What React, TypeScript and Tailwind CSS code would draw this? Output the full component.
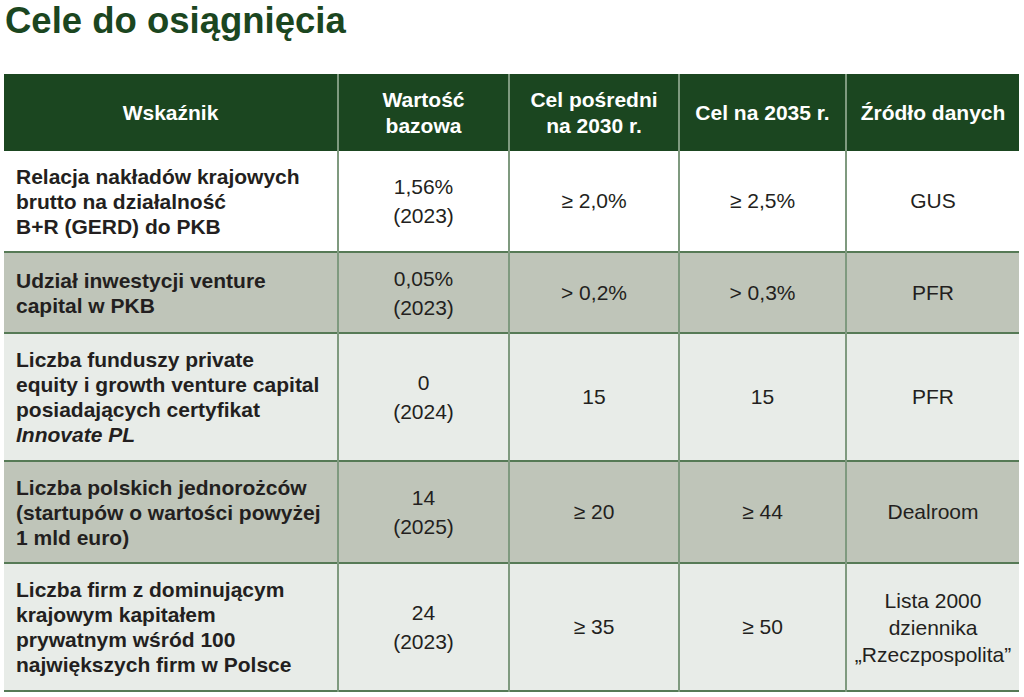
import React from "react";

type Row = {
  label: React.ReactNode;
  base: [string, string];
  mid: string;
  target: string;
  source: React.ReactNode;
  bg: string;
  h: string;
};

const rows: Row[] = [
  {
    label: (
      <>
        Relacja nakładów krajowych
        <br />
        brutto na działalność
        <br />
        B+R (GERD) do PKB
      </>
    ),
    base: ["1,56%", "(2023)"],
    mid: "≥ 2,0%",
    target: "≥ 2,5%",
    source: "GUS",
    bg: "bg-white",
    h: "h-[101px]",
  },
  {
    label: (
      <>
        Udział inwestycji venture
        <br />
        capital w PKB
      </>
    ),
    base: ["0,05%", "(2023)"],
    mid: "> 0,2%",
    target: "> 0,3%",
    source: "PFR",
    bg: "bg-[#bfc5b9]",
    h: "h-[81px]",
  },
  {
    label: (
      <>
        Liczba funduszy private
        <br />
        equity i growth venture capital
        <br />
        posiadających certyfikat
        <br />
        <i>Innovate PL</i>
      </>
    ),
    base: ["0", "(2024)"],
    mid: "15",
    target: "15",
    source: "PFR",
    bg: "bg-[#e8ece8]",
    h: "h-[128px]",
  },
  {
    label: (
      <>
        Liczba polskich jednorożców
        <br />
        (startupów o wartości powyżej
        <br />1 mld euro)
      </>
    ),
    base: ["14", "(2025)"],
    mid: "≥ 20",
    target: "≥ 44",
    source: "Dealroom",
    bg: "bg-[#bfc5b9]",
    h: "h-[102px]",
  },
  {
    label: (
      <>
        Liczba firm z dominującym
        <br />
        krajowym kapitałem
        <br />
        prywatnym wśród 100
        <br />
        największych firm w Polsce
      </>
    ),
    base: ["24", "(2023)"],
    mid: "≥ 35",
    target: "≥ 50",
    source: (
      <span className="block leading-[27px]">
        Lista 2000
        <br />
        dziennika
        <br />
        „Rzeczpospolita”
      </span>
    ),
    bg: "bg-[#e8ece8]",
    h: "h-[128px]",
  },
];

export default function App() {
  return (
    <div
      className="w-[1024px] h-[697px] bg-white overflow-hidden text-[#231f20]"
      style={{ fontFamily: '"Liberation Sans", Arial, sans-serif' }}
    >
      <h1 className="pl-[5px] pt-0 text-[36.5px] leading-[42px] font-bold text-[#1b4620]">
        Cele do osiągnięcia
      </h1>
      <div className="pl-[4px] pt-[32px]">
        <table className="w-[1015px] table-fixed border-collapse text-[21px]">
          <colgroup>
            <col className="w-[334px]" />
            <col className="w-[171px]" />
            <col className="w-[170px]" />
            <col className="w-[167px]" />
            <col className="w-[173px]" />
          </colgroup>
          <thead>
            <tr className="h-[77px] bg-[#1b4620] text-white font-bold leading-[26px]">
              <th className="border-r-2 border-[#7f9a7f] text-center font-bold">Wskaźnik</th>
              <th className="border-r-2 border-[#7f9a7f] text-center font-bold">
                Wartość
                <br />
                bazowa
              </th>
              <th className="border-r-2 border-[#7f9a7f] text-center font-bold">
                Cel pośredni
                <br />
                na 2030 r.
              </th>
              <th className="border-r-2 border-[#7f9a7f] text-center font-bold">Cel na 2035 r.</th>
              <th className="text-center font-bold">Źródło danych</th>
            </tr>
          </thead>
          <tbody>
            {rows.map((r, i) => (
              <tr key={i} className={`${r.bg} ${r.h} border-b-2 border-[#567a56]`}>
                <td className="border-r-2 border-[#7f9a7f] pl-[12px] pr-0 font-bold leading-[25px] align-middle whitespace-nowrap">
                  {r.label}
                </td>
                <td className="border-r-2 border-[#7f9a7f] text-center leading-[29px] align-middle">
                  {r.base[0]}
                  <br />
                  {r.base[1]}
                </td>
                <td className="border-r-2 border-[#7f9a7f] text-center align-middle">{r.mid}</td>
                <td className="border-r-2 border-[#7f9a7f] text-center align-middle">{r.target}</td>
                <td className="text-center align-middle whitespace-nowrap">{r.source}</td>
              </tr>
            ))}
          </tbody>
        </table>
      </div>
    </div>
  );
}
